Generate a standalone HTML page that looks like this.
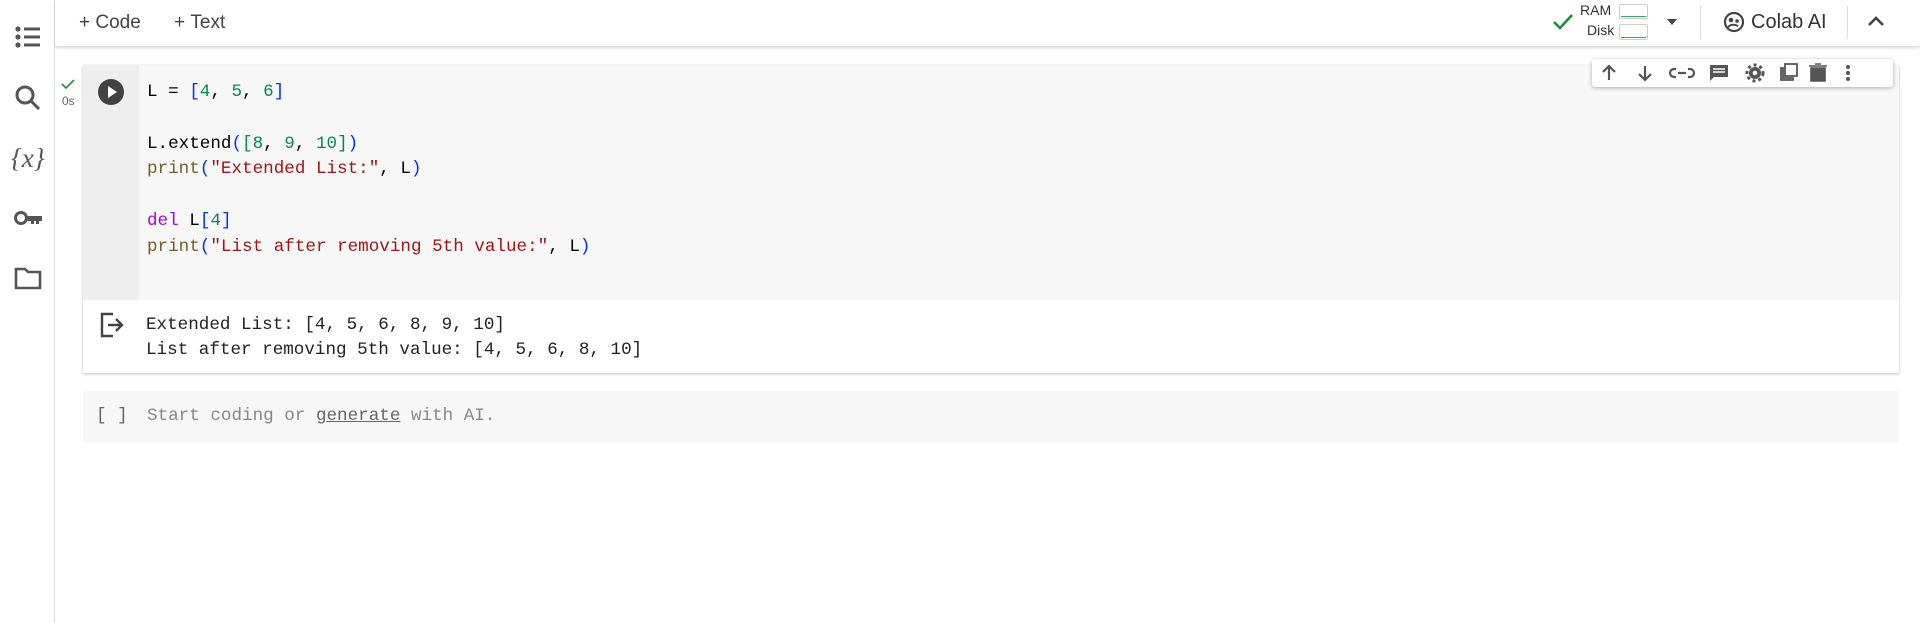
<!DOCTYPE html>
<html><head><meta charset="utf-8"><style>
*{box-sizing:border-box;margin:0;padding:0}
body{width:1920px;height:623px;background:#fff;font-family:"Liberation Sans",sans-serif;position:relative;overflow:hidden;color:#444}
.side{position:absolute;left:0;top:0;width:55px;height:623px;border-right:1px solid #e0e0e0}
.side svg{position:absolute;left:14px}
.top{position:absolute;left:55px;top:0;right:0;height:46px;background:#fff;box-shadow:0 2px 3px rgba(0,0,0,.15)}
.mono{font-family:"Liberation Mono",monospace;font-size:17.6px;white-space:pre}
.abs{position:absolute}
.cell{position:absolute;left:83px;top:65px;width:1816px;height:308px;box-shadow:0 1px 3px rgba(0,0,0,.25)}
.b{color:#0431fa}.n{color:#098658}.f{color:#795e26}.s{color:#a31515}.k{color:#af00db}
</style></head><body>
<div class="side">
<svg style="top:25px" width="28" height="24" viewBox="0 0 28 24"><g fill="#555"><circle cx="4" cy="4" r="2.6"/><circle cx="4" cy="12" r="2.6"/><circle cx="4" cy="20" r="2.6"/><rect x="10" y="2.5" width="16" height="3"/><rect x="10" y="10.5" width="16" height="3"/><rect x="10" y="18.5" width="16" height="3"/></g></svg>
<svg style="top:84px" width="28" height="28" viewBox="0 0 28 28"><circle cx="11" cy="11" r="8" fill="none" stroke="#555" stroke-width="3"/><path d="M17 17l8 8" stroke="#555" stroke-width="3"/></svg>
<div class="abs" style="left:11px;top:143px;font-family:'Liberation Serif',serif;font-size:27px;font-style:italic;color:#555">{x}</div>
<svg style="top:208px" width="30" height="20" viewBox="0 0 30 20"><circle cx="7" cy="10" r="5.5" fill="none" stroke="#555" stroke-width="3"/><path d="M12 8h16v5h-3v3h-3v-3h-2v3h-3v-3h-5z" fill="#555"/></svg>
<svg style="top:266px" width="28" height="24" viewBox="0 0 28 24"><path d="M2 3h9l3 3h12v16H2z" fill="none" stroke="#555" stroke-width="2.6"/></svg>
</div>
<div class="top">
<div class="abs" style="left:24px;top:12px;font-size:19px;color:#444">+&nbsp;Code</div>
<div class="abs" style="left:119px;top:12px;font-size:19px;color:#444">+&nbsp;Text</div>
<svg class="abs" style="left:1497px;top:13px" width="22" height="18" viewBox="0 0 22 18"><path d="M2 9l6 6L20 2" fill="none" stroke="#1e8e3e" stroke-width="2.6"/></svg>
<div class="abs" style="left:1525px;top:2px;font-size:14px;color:#333">RAM</div>
<div class="abs" style="left:1532px;top:22px;font-size:14px;color:#333">Disk</div>
<div class="abs" style="left:1564px;top:4px;width:29px;height:15px;border:1px solid #ccc;border-radius:2px"><div style="position:absolute;left:1px;right:1px;bottom:1px;height:1px;background:#34a853"></div></div>
<div class="abs" style="left:1564px;top:24px;width:29px;height:16px;border:1px solid #ccc;border-radius:2px"><div style="position:absolute;left:1px;right:1px;bottom:1px;height:1px;background:#34a853"></div></div>
<div class="abs" style="left:1612px;top:19px;border-left:5px solid transparent;border-right:5px solid transparent;border-top:6px solid #444"></div>
<div class="abs" style="left:1645px;top:6px;width:1px;height:33px;background:#ddd"></div>
<svg class="abs" style="left:1668px;top:11px" width="22" height="22" viewBox="0 0 22 22"><circle cx="11" cy="11" r="9" fill="none" stroke="#444" stroke-width="2.2"/><circle cx="8" cy="9" r="2.3" fill="#444"/><circle cx="14" cy="10" r="1.8" fill="#444"/><path d="M5 16c3-3 6-3 10-1" fill="none" stroke="#444" stroke-width="2"/></svg>
<div class="abs" style="left:1696px;top:11px;font-size:20px;color:#333">Colab AI</div>
<div class="abs" style="left:1792px;top:6px;width:1px;height:33px;background:#ddd"></div>
<svg class="abs" style="left:1812px;top:15px" width="18" height="12" viewBox="0 0 18 12"><path d="M2 10l7-7 7 7" fill="none" stroke="#444" stroke-width="2.6"/></svg>
</div>
<svg class="abs" style="left:60px;top:78px" width="16" height="12" viewBox="0 0 16 12"><path d="M2 6l4 4 8-8" fill="none" stroke="#1e8e3e" stroke-width="1.6"/></svg>
<div class="abs" style="left:62px;top:94px;font-size:12px;color:#666">0s</div>
<div class="cell">
<div class="abs" style="left:0;top:0;width:56px;height:235px;background:#eeeeee"></div>
<div class="abs" style="left:56px;top:0;right:0;height:235px;background:#f7f7f7"></div>
<svg class="abs" style="left:15px;top:14px" width="26" height="26" viewBox="0 0 26 26"><circle cx="13" cy="13" r="13" fill="#424242"/><path d="M10 7l9 6-9 6z" fill="#fff"/></svg>
<div class="abs mono" style="left:64px;top:15px;line-height:25.8px;color:#000">L = <span class="b">[</span><span class="n">4</span>, <span class="n">5</span>, <span class="n">6</span><span class="b">]</span>

L.extend<span class="b">(</span><span class="n">[8</span>, <span class="n">9</span>, <span class="n">10]</span><span class="b">)</span>
<span class="f">print</span><span class="b">(</span><span class="s">"Extended List:"</span>, L<span class="b">)</span>

<span class="k">del</span> L<span class="b">[</span><span class="n">4</span><span class="b">]</span>
<span class="f">print</span><span class="b">(</span><span class="s">"List after removing 5th value:"</span>, L<span class="b">)</span></div>
<svg class="abs" style="left:16px;top:247px" width="26" height="26" viewBox="0 0 26 26"><path d="M14 2H3v22h11" fill="none" stroke="#444" stroke-width="2.4"/><path d="M9 13h14M17 7l6 6-6 6" fill="none" stroke="#444" stroke-width="2.4"/></svg>
<div class="abs mono" style="left:63px;top:248px;line-height:24.5px;color:#222">Extended List: [4, 5, 6, 8, 9, 10]
List after removing 5th value: [4, 5, 6, 8, 10]</div>
</div>
<div class="abs" style="left:1592px;top:59px;width:301px;height:28px;background:#fff;border-radius:3px;box-shadow:0 1px 4px rgba(0,0,0,.3)">
<svg width="301" height="28" viewBox="0 0 301 28"><g fill="none" stroke="#555" stroke-width="2.2"><path d="M17 21V7M11 13l6-6 6 6"/><path d="M53 7v14M47 15l6 6 6-6"/><path d="M86 14h8M84 10h-2a4 4 0 000 8h2M96 10h2a4 4 0 010 8h-2"/></g>
<path d="M118 6h18v12h-14l-4 4z" fill="#555"/><path d="M121 10h12M121 13h12" stroke="#fff" stroke-width="1.4"/>
<circle cx="163" cy="14" r="6" fill="#555"/><circle cx="163" cy="14" r="8" fill="none" stroke="#555" stroke-width="3" stroke-dasharray="3 3"/><circle cx="163" cy="14" r="2.3" fill="#fff"/>
<path d="M189 21V9h2v10h10v2zM193 17V5h12v12z" fill="none" stroke="#555" stroke-width="1.8"/>
<path d="M219 9h14v13h-14zM217 7h18M223 5h6" fill="#555" stroke="#555" stroke-width="1.6"/>
<g fill="#555"><circle cx="256" cy="8" r="2"/><circle cx="256" cy="14" r="2"/><circle cx="256" cy="20" r="2"/></g></svg>
</div>
<div class="abs" style="left:83px;top:391px;width:1816px;height:52px;background:#f7f7f7"></div>
<div class="abs mono" style="left:96px;top:406px;color:#666">[ ]</div>
<div class="abs mono" style="left:147px;top:406px;color:#888">Start coding or <span style="text-decoration:underline;color:#666">generate</span> with AI.</div>
</body></html>
